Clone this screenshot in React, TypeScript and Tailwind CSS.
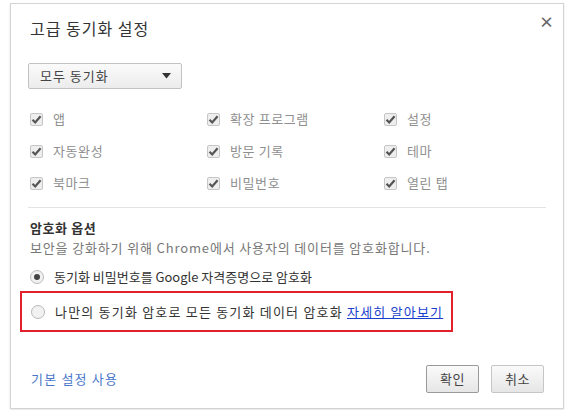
import React from "react";

const font = { fontFamily: '"Noto Sans CJK KR", "Noto Sans", sans-serif' };

function Check({ label }: { label: string }) {
  return (
    <div className="flex items-center h-[20px]">
      <div className="w-[13px] h-[13px] rounded-[2px] border border-[#c6c6c6] bg-[#eeeeee] flex items-center justify-center">
        <svg width="11" height="11" viewBox="0 0 11 11">
          <path d="M1.5 5.8 L4.2 8.5 L9.6 2.2" fill="none" stroke="#555" strokeWidth="2.2" />
        </svg>
      </div>
      <span className="ml-[10px] text-[13px] tracking-[0.6px] text-[#8f8f8f]">{label}</span>
    </div>
  );
}

function Radio({ checked }: { checked: boolean }) {
  return (
    <div className="w-[14px] h-[14px] rounded-full border border-[#b9b9b9] bg-[#f1f1f1] flex items-center justify-center">
      {checked && <div className="w-[6px] h-[6px] rounded-full bg-[#444]" />}
    </div>
  );
}

export default function App() {
  const rows = [
    ["앱", "확장 프로그램", "설정"],
    ["자동완성", "방문 기록", "테마"],
    ["북마크", "비밀번호", "열린 탭"],
  ];
  return (
    <div className="w-[580px] h-[410px] bg-white pt-[3px] pl-[10px]" style={font}>
      <div className="w-[554px] h-[406px] border border-[#d4d4d4] shadow-[0_1px_2px_rgba(0,0,0,0.12)] bg-white flex flex-col relative">
        <div className="absolute right-[9px] top-[10px] text-[#666] text-[15px] leading-none font-bold">×</div>
        <div className="pl-[19px] pt-[13px] text-[16px] tracking-[1px] text-[#333] leading-[22px]">고급 동기화 설정</div>
        <div className="ml-[17px] mt-[24px] w-[154px] h-[26px] border border-[#c3c3c3] rounded-[2px] bg-gradient-to-b from-[#fafafa] to-[#ececec] flex items-center justify-between pl-[11px] pr-[10px]">
          <span className="text-[13px] tracking-[1px] text-[#444]">모두 동기화</span>
          <svg width="9" height="6" viewBox="0 0 9 6"><path d="M0 0 H9 L4.5 5.5 Z" fill="#333" /></svg>
        </div>
        <div className="ml-[19px] mt-[20px] flex flex-col gap-[12px]">
          {rows.map((r, i) => (
            <div key={i} className="grid grid-cols-[177px_177px_150px]">
              {r.map((l) => (
                <Check key={l} label={l} />
              ))}
            </div>
          ))}
        </div>
        <div className="mx-[17px] mt-[14px] border-t border-[#e3e3e3]" />
        <div className="pl-[19px] mt-[11px] text-[13px] tracking-[0.6px] text-[#333] font-bold leading-[18px]">암호화 옵션</div>
        <div className="pl-[19px] mt-[2px] text-[13px] tracking-[0.85px] text-[#777] leading-[18px]">
          보안을 강화하기 위해 Chrome에서 사용자의 데이터를 암호화합니다.
        </div>
        <div className="pl-[19px] mt-[11px] flex items-center h-[18px]">
          <Radio checked />
          <span className="ml-[10px] text-[13px] tracking-[0px] text-[#333]">동기화 비밀번호를 Google 자격증명으로 암호화</span>
        </div>
        <div className="ml-[9px] mt-[5px] w-[433px] h-[41px] border-2 border-[#e0202a] flex items-center pl-[9px]">
          <Radio checked={false} />
          <span className="ml-[10px] text-[13px] tracking-[1.2px] text-[#333]">
            나만의 동기화 암호로 모든 동기화 데이터 암호화{" "}
            <span className="text-[#1a3fd0] underline">자세히 알아보기</span>
          </span>
        </div>
        <div className="mt-auto mb-[15px] flex items-center justify-between pl-[20px] pr-[19px]">
          <span className="text-[13px] tracking-[1.2px] text-[#4a77c9]">기본 설정 사용</span>
          <div className="flex gap-[12px]">
            <div className="w-[53px] h-[28px] border border-[#9a9a9a] rounded-[2px] bg-gradient-to-b from-[#fafafa] to-[#e6e6e6] flex items-center justify-center text-[13px] tracking-[0.6px] text-[#444]">확인</div>
            <div className="w-[53px] h-[28px] border border-[#c6c6c6] rounded-[2px] bg-gradient-to-b from-[#fafafa] to-[#e6e6e6] flex items-center justify-center text-[13px] tracking-[0.6px] text-[#444]">취소</div>
          </div>
        </div>
      </div>
    </div>
  );
}
